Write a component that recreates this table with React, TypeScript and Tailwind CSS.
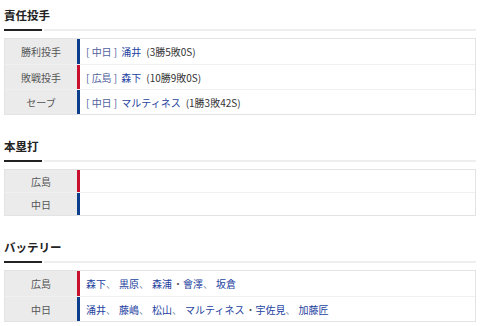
import type { ReactNode } from "react";

type Team = "d" | "c";

const barColor: Record<Team, string> = {
    d: "bg-[#0b3f8c]",
    c: "bg-[#c8102e]",
};

const pitchers: { label: string; team: Team; teamName: string; name: string; stats: string }[] = [
    { label: "勝利投手", team: "d", teamName: "中日", name: "涌井", stats: "(3勝5敗0S)" },
    { label: "敗戦投手", team: "c", teamName: "広島", name: "森下", stats: "(10勝9敗0S)" },
    { label: "セーブ", team: "d", teamName: "中日", name: "マルティネス", stats: "(1勝3敗42S)" },
];

const battery: { label: string; team: Team; names: string[][] }[] = [
    { label: "広島", team: "c", names: [["森下"], ["黒原"], ["森浦", "會澤"], ["坂倉"]] },
    { label: "中日", team: "d", names: [["涌井"], ["藤嶋"], ["松山"], ["マルティネス", "宇佐見"], ["加藤匠"]] },
];

function Heading({ text, first }: { text: string; first?: boolean }) {
    return (
        <div className={first ? "" : "mt-[16px]"}>
            <h2 className="h-[29px] pt-[6px] text-[11.5px] leading-[18px] font-bold text-[#222]">{text}</h2>
            <div className="flex gap-[2px] h-[2px]">
                <div className="w-[38px] bg-[#222]" />
                <div className="flex-1 bg-[#eeeeee]" />
            </div>
        </div>
    );
}

function Row({ label, team, h, first, children }: { label: string; team: Team; h: string; first?: boolean; children?: ReactNode }) {
    return (
        <div className={`flex ${h} ${first ? "" : "border-t border-[#f0f0f0]"}`}>
            <div className="w-[72px] shrink-0 bg-[#ebebeb] flex items-center justify-center text-[10px] text-[#555]">
                {label}
            </div>
            <div className={`w-[3px] shrink-0 ${barColor[team]}`} />
            <div className="flex-1 flex items-center pl-[6px] text-[10px] whitespace-nowrap">{children}</div>
        </div>
    );
}

export default function App() {
    return (
        <div className="w-[480px] h-[326px] overflow-hidden bg-white px-[4px] font-['Noto_Sans_CJK_JP','Noto_Sans',sans-serif]">
            <Heading text="責任投手" first />
            <div className="mt-[7px] border border-[#e3e3e3]">
                {pitchers.map((p, idx) => (
                    <Row key={idx} label={p.label} team={p.team} h="h-[25px]" first={idx === 0}>
                        <span className="text-[#50629c]">[ {p.teamName} ]</span>
                        <span className="ml-[4px] text-[#2441a0]">{p.name}</span>
                        <span className="ml-[5px] text-[#333]">{p.stats}</span>
                    </Row>
                ))}
            </div>

            <Heading text="本塁打" />
            <div className="mt-[7px] border border-[#e3e3e3]">
                <Row label="広島" team="c" h="h-[22px]" first />
                <Row label="中日" team="d" h="h-[23px]" />
            </div>

            <Heading text="バッテリー" />
            <div className="mt-[7px] border border-[#e3e3e3]">
                {battery.map((b, idx) => (
                    <Row key={idx} label={b.label} team={b.team} h="h-[25px]" first={idx === 0}>
                        {b.names.map((group, gi) => (
                            <span key={gi}>
                                {gi > 0 && <span className="text-[#7a86aa] mr-[3px]">、</span>}
                                {group.map((n, ni) => (
                                    <span key={ni}>
                                        {ni > 0 && <span className="text-[#555] ml-[1px]">・</span>}
                                        <span className="text-[#2441a0]">{n}</span>
                                    </span>
                                ))}
                            </span>
                        ))}
                    </Row>
                ))}
            </div>
        </div>
    );
}
